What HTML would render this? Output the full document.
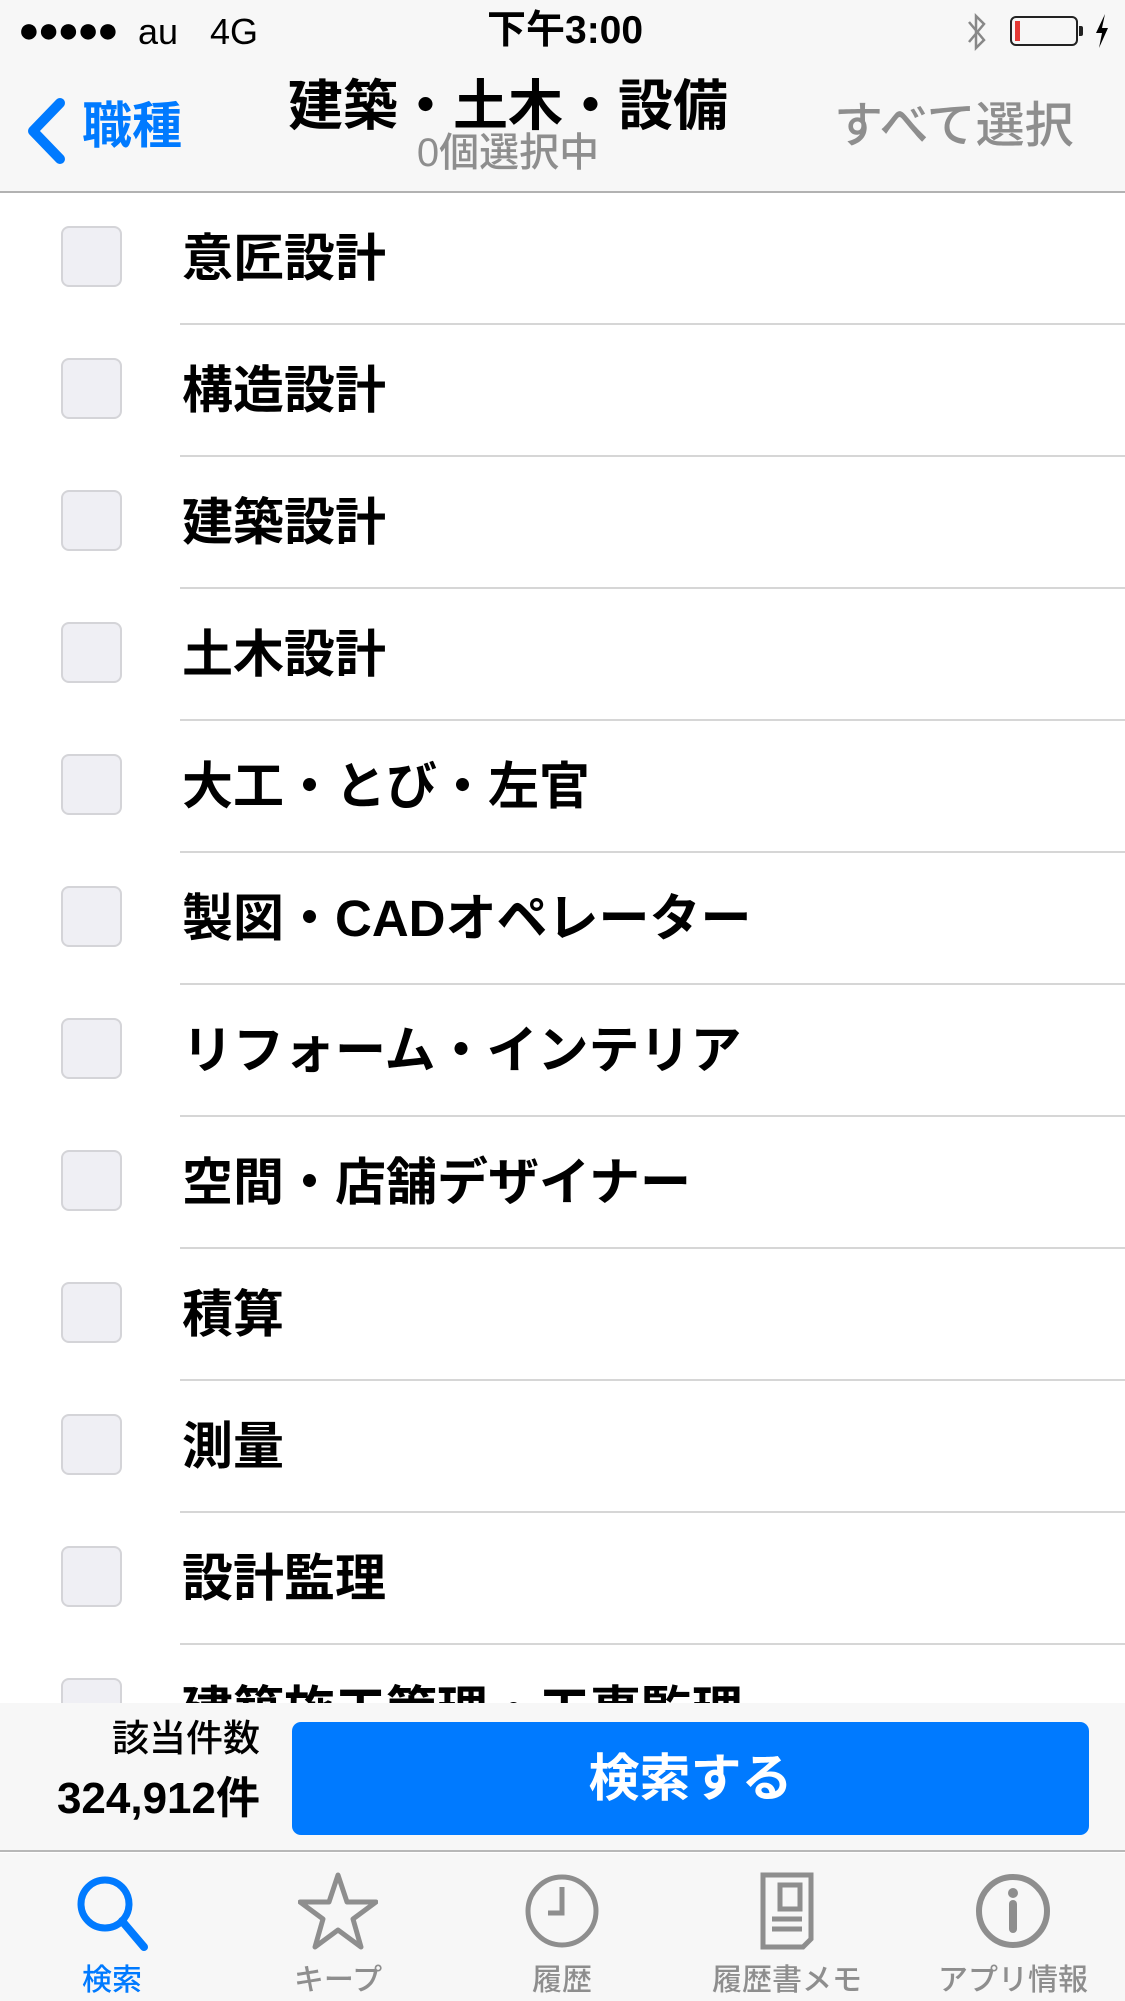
<!DOCTYPE html>
<html><head><meta charset="utf-8">
<style>
*{margin:0;padding:0;box-sizing:border-box}
body{width:1125px;height:2001px;overflow:hidden;background:#fff;font-family:"Liberation Sans","Noto Sans CJK JP",sans-serif;position:relative}
.abs{position:absolute}
#top{left:0;top:0;width:1125px;height:193px;background:#f7f7f7;border-bottom:2px solid #b2b2b2}
.row{position:absolute;left:0;width:1125px;height:132px}
.cb{position:absolute;left:61px;top:33px;width:61px;height:61px;border:2px solid #d4d4d8;border-radius:8px;background:#efeff4}
.lbl{position:absolute;left:182px;top:0;line-height:132px;font-size:51px;font-weight:bold;color:#000;white-space:nowrap}
.sep{position:absolute;left:180px;right:0;bottom:0;height:2px;background:#d6d6d6}
#bot{left:0;top:1703px;width:1125px;height:149px;background:#f7f7f7;border-bottom:2px solid #b8b8b8}
#tab{left:0;top:1853px;width:1125px;height:148px;background:#f7f7f7}
.t{position:absolute;top:0;width:240px;margin-left:-120px;text-align:center}
.t span{position:absolute;left:0;right:0;top:110px;font-size:30px;color:#8e8e8e;line-height:36px;font-weight:500}
.t svg{position:absolute;left:80px;top:18px}
</style></head><body>
<div id="top" class="abs">
 <div class="abs" style="left:18px;top:8px;font-size:36px;line-height:44px;letter-spacing:-2px">●●●●●</div>
 <div class="abs" style="left:138px;top:10px;font-size:36px;line-height:44px;font-weight:500">au</div>
 <div class="abs" style="left:210px;top:10px;font-size:36px;line-height:44px;font-weight:500">4G</div>
 <div class="abs" style="left:487px;top:8px;font-size:39px;line-height:46px;font-weight:bold">下午3:00</div>
 <svg class="abs" style="left:966px;top:12px" width="22" height="40" viewBox="0 0 22 40"><path d="M3 10 L18 28 L10 36 L10 4 L18 12 L3 30" fill="none" stroke="#888" stroke-width="2.5"/></svg>
 <div class="abs" style="left:1010px;top:16px;width:68px;height:30px;border:2px solid #222;border-radius:6px"><div style="position:absolute;left:3px;top:3px;width:5px;height:20px;background:#e53935"></div></div>
 <div class="abs" style="left:1079px;top:26px;width:4px;height:10px;background:#222;border-radius:0 2px 2px 0"></div>
 <svg class="abs" style="left:1094px;top:14px" width="16" height="34" viewBox="0 0 16 34"><path d="M11 0 L2 19 L8 19 L5 34 L14 14 L8 14 Z" fill="#000"/></svg>
 <svg class="abs" style="left:24px;top:98px" width="44" height="66" viewBox="0 0 44 66"><path d="M36 5 L9 33 L36 61" fill="none" stroke="#007aff" stroke-width="10" stroke-linecap="round" stroke-linejoin="round"/></svg>
 <div class="abs" style="left:82px;top:94px;font-size:50px;color:#007aff;line-height:64px;font-weight:bold">職種</div>
 <div class="abs" style="left:0;width:1016px;top:74px;text-align:center;font-size:55px;font-weight:bold;line-height:64px">建築・土木・設備</div>
 <div class="abs" style="left:0;width:1016px;top:130px;text-align:center;font-size:40px;color:#8e8e8e;line-height:46px;font-weight:500">0個選択中</div>
 <div class="abs" style="left:834px;top:94px;font-size:49px;color:#8e8e8e;line-height:64px;font-weight:500">すべて選択</div>
</div>

<div class="row" style="top:193px"><div class="cb"></div><div class="lbl">意匠設計</div><div class="sep"></div></div>
<div class="row" style="top:325px"><div class="cb"></div><div class="lbl">構造設計</div><div class="sep"></div></div>
<div class="row" style="top:457px"><div class="cb"></div><div class="lbl">建築設計</div><div class="sep"></div></div>
<div class="row" style="top:589px"><div class="cb"></div><div class="lbl">土木設計</div><div class="sep"></div></div>
<div class="row" style="top:721px"><div class="cb"></div><div class="lbl">大工・とび・左官</div><div class="sep"></div></div>
<div class="row" style="top:853px"><div class="cb"></div><div class="lbl">製図・CADオペレーター</div><div class="sep"></div></div>
<div class="row" style="top:985px"><div class="cb"></div><div class="lbl">リフォーム・インテリア</div><div class="sep"></div></div>
<div class="row" style="top:1117px"><div class="cb"></div><div class="lbl">空間・店舗デザイナー</div><div class="sep"></div></div>
<div class="row" style="top:1249px"><div class="cb"></div><div class="lbl">積算</div><div class="sep"></div></div>
<div class="row" style="top:1381px"><div class="cb"></div><div class="lbl">測量</div><div class="sep"></div></div>
<div class="row" style="top:1513px"><div class="cb"></div><div class="lbl">設計監理</div><div class="sep"></div></div>
<div class="row" style="top:1645px"><div class="cb"></div><div class="lbl">建築施工管理・工事監理</div></div>

<div id="bot" class="abs">
 <div class="abs" style="left:0;width:260px;top:14px;text-align:right;font-size:37px;line-height:44px;font-weight:500">該当件数</div>
 <div class="abs" style="left:0;width:260px;top:70px;text-align:right;font-size:44px;line-height:52px;font-weight:bold">324,912件</div>
 <div class="abs" style="left:292px;top:19px;width:797px;height:113px;background:#007aff;border-radius:9px;color:#fff;text-align:center;font-size:51px;line-height:113px;font-weight:bold">検索する</div>
</div>

<div id="tab" class="abs">
 <div class="t" style="left:112px"><svg width="80" height="80" viewBox="0 0 80 80"><circle cx="33" cy="33" r="24" fill="none" stroke="#007aff" stroke-width="7"/><path d="M50 50 L72 76" stroke="#007aff" stroke-width="8" stroke-linecap="round"/></svg><span style="color:#007aff">検索</span></div>
 <div class="t" style="left:338px"><svg width="80" height="80" viewBox="0 0 80 80"><path d="M40 4 L49 31 L78 31 L55 48 L63 76 L40 59 L17 76 L25 48 L2 31 L31 31 Z" fill="none" stroke="#8e8e8e" stroke-width="5" stroke-linejoin="round"/></svg><span>キープ</span></div>
 <div class="t" style="left:562px"><svg width="80" height="80" viewBox="0 0 80 80"><circle cx="40" cy="40" r="34" fill="none" stroke="#8e8e8e" stroke-width="5"/><path d="M40 16 L40 42 L26 42" fill="none" stroke="#8e8e8e" stroke-width="5"/></svg><span>履歴</span></div>
 <div class="t" style="left:787px"><svg width="80" height="80" viewBox="0 0 80 80"><path d="M16 4 L64 4 L64 68 L56 76 L16 76 Z" fill="none" stroke="#8e8e8e" stroke-width="5"/><rect x="33" y="14" width="20" height="24" fill="none" stroke="#8e8e8e" stroke-width="5"/><path d="M25 48 L55 48 M25 58 L55 58" stroke="#8e8e8e" stroke-width="5"/></svg><span>履歴書メモ</span></div>
 <div class="t" style="left:1013px"><svg width="80" height="80" viewBox="0 0 80 80"><circle cx="40" cy="40" r="34" fill="none" stroke="#8e8e8e" stroke-width="6"/><circle cx="40" cy="22" r="5" fill="#8e8e8e"/><path d="M40 33 L40 58" stroke="#8e8e8e" stroke-width="8" stroke-linecap="round"/></svg><span>アプリ情報</span></div>
</div>
</body></html>
